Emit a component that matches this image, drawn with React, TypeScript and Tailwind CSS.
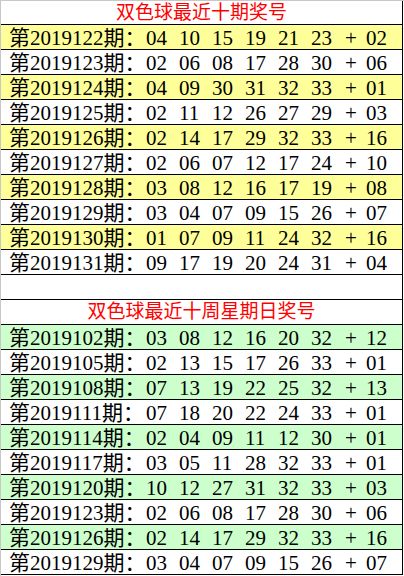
const recent: [string, string[], string][] = [
  ["2019122", ["04", "10", "15", "19", "21", "23"], "02"],
  ["2019123", ["02", "06", "08", "17", "28", "30"], "06"],
  ["2019124", ["04", "09", "30", "31", "32", "33"], "01"],
  ["2019125", ["02", "11", "12", "26", "27", "29"], "03"],
  ["2019126", ["02", "14", "17", "29", "32", "33"], "16"],
  ["2019127", ["02", "06", "07", "12", "17", "24"], "10"],
  ["2019128", ["03", "08", "12", "16", "17", "19"], "08"],
  ["2019129", ["03", "04", "07", "09", "15", "26"], "07"],
  ["2019130", ["01", "07", "09", "11", "24", "32"], "16"],
  ["2019131", ["09", "17", "19", "20", "24", "31"], "04"],
];

const sundays: [string, string[], string][] = [
  ["2019102", ["03", "08", "12", "16", "20", "32"], "12"],
  ["2019105", ["02", "13", "15", "17", "26", "33"], "01"],
  ["2019108", ["07", "13", "19", "22", "25", "32"], "13"],
  ["2019111", ["07", "18", "20", "22", "24", "33"], "01"],
  ["2019114", ["02", "04", "09", "11", "12", "30"], "01"],
  ["2019117", ["03", "05", "11", "28", "32", "33"], "01"],
  ["2019120", ["10", "12", "27", "31", "32", "33"], "03"],
  ["2019123", ["02", "06", "08", "17", "28", "30"], "06"],
  ["2019126", ["02", "14", "17", "29", "32", "33"], "16"],
  ["2019129", ["03", "04", "07", "09", "15", "26"], "07"],
];

const font = { fontFamily: "'Liberation Serif', 'Noto Sans CJK SC', serif" };

function DrawRow({
  issue,
  reds,
  blue,
  shaded,
}: {
  issue: string;
  reds: string[];
  blue: string;
  shaded: string;
}) {
  return (
    <div
      className={`flex h-[25px] items-center border-b border-black pl-[8px] pt-[2px] text-[21px] leading-[22px] text-black ${shaded}`}
    >
      <span className="w-[137px] whitespace-nowrap">
        第{issue}期：
      </span>
      {reds.map((n, i) => (
        <span key={i} className="w-[33px]">
          {n}
        </span>
      ))}
      <span className="w-[22px] pl-[1px]">+</span>
      <span>{blue}</span>
    </div>
  );
}

function Title({ text }: { text: string }) {
  return (
    <div className="flex h-[25px] items-center justify-center border-b border-black text-[19px] leading-[24px] text-[#ff0000]">
      {text}
    </div>
  );
}

export default function App() {
  return (
    <div
      className="h-[576px] w-[404px] overflow-hidden border-t border-l border-[#c8c8c8] bg-white"
      style={font}
    >
      <div className="w-[402px] border-r border-black">
        <div className="flex h-[24px] items-center justify-center border-b border-black text-[19px] leading-[24px] text-[#ff0000]">
          双色球最近十期奖号
        </div>
        {recent.map(([issue, reds, blue], i) => (
          <DrawRow
            key={issue}
            issue={issue}
            reds={reds}
            blue={blue}
            shaded={i % 2 === 0 ? "bg-[#ffff99]" : "bg-white"}
          />
        ))}
        <div className="h-[25px] border-b border-black" />
        <Title text="双色球最近十周星期日奖号" />
        {sundays.map(([issue, reds, blue], i) => (
          <DrawRow
            key={issue}
            issue={issue}
            reds={reds}
            blue={blue}
            shaded={i % 2 === 0 ? "bg-[#ccffcc]" : "bg-white"}
          />
        ))}
      </div>
    </div>
  );
}
